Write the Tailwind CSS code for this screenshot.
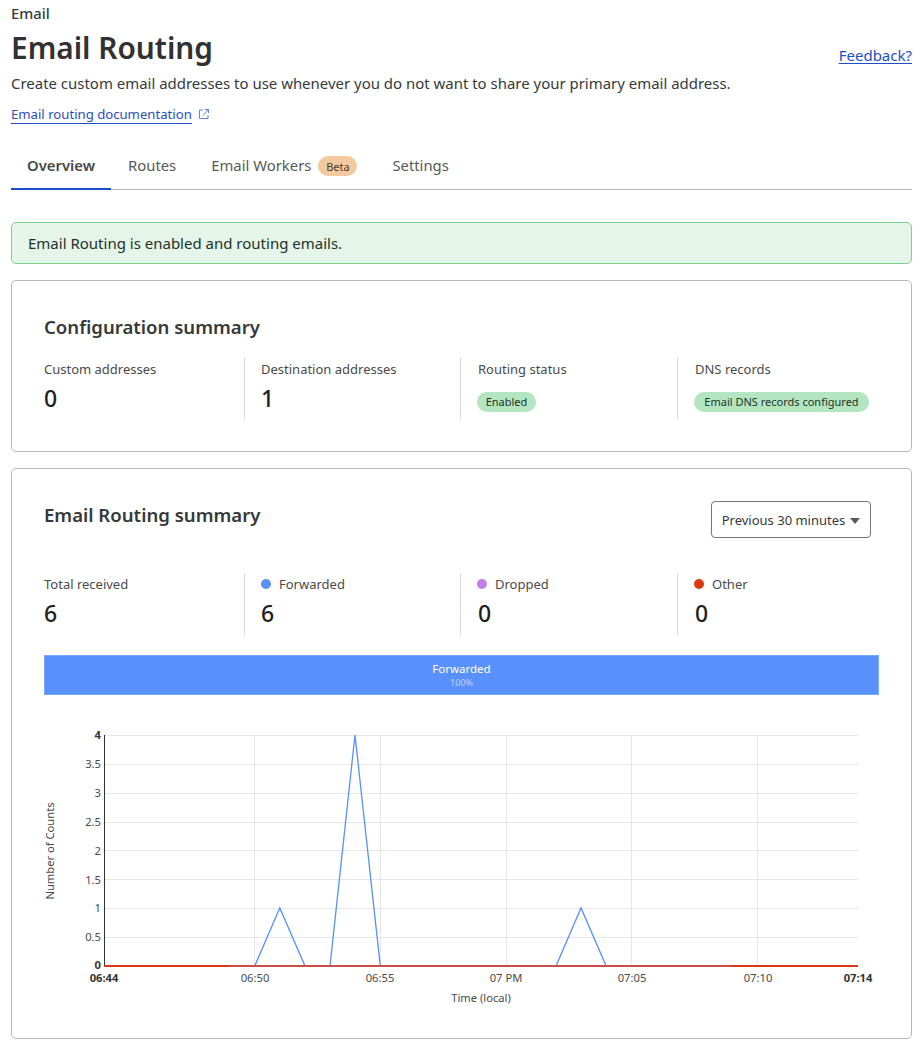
<!doctype html>
<html lang="en">
<head>
<meta charset="utf-8">
<title>Email Routing</title>
<script src="https://cdn.jsdelivr.net/npm/@tailwindcss/browser@4"></script>
</head>
<body class="bg-white font-['Noto_Sans',sans-serif] text-[#313131] overflow-hidden">
<div class="w-[923px] h-[1045px] overflow-hidden px-[11px]">
  <div class="w-[901px]">
    <div class="pt-[4px] h-[27px] text-[14.8px] leading-[18px] font-medium text-[#36393a]">Email</div>
    <div class="flex justify-between items-start h-[44px]">
      <h1 class="text-[29.8px] leading-[42px] font-semibold text-[#313131]">Email Routing</h1>
      <a class="mt-[18px] text-[15px] leading-[20px] text-[#1d4fc4] underline underline-offset-2">Feedback?</a>
    </div>
    <p class="mt-[1px] text-[14.96px] leading-[22px] text-[#36393a]">Create custom email addresses to use whenever you do not want to share your primary email address.</p>
    <div class="mt-[9px] flex items-center gap-[6px] h-[22px]">
      <a class="text-[13.15px] leading-[18px] text-[#2c4fbd] border-b border-[#1d4fc4]">Email routing documentation</a>
      <svg class="w-[12px] h-[12px] text-[#5f86d8]" viewBox="0 0 12 12" fill="none" stroke="currentColor" stroke-width="1"><path d="M5 2H1.5v8.5H10V7"/><path d="M5 7.5 10.5 1.5M7 1.5h3.5V5"/></svg>
    </div>
    <nav class="mt-[20px] h-[45px] flex items-stretch border-b border-[#b5b5b5] text-[14.85px] text-[#595959]">
      <a class="w-[100px] pl-[16px] pt-[9px] leading-[22px] font-semibold text-[#484848] border-b-2 border-[#1d4fc4] mb-[-1px]">Overview</a>
      <a class="ml-[17px] pt-[9px] leading-[22px]">Routes</a>
      <a class="ml-[35px] pt-[9px] leading-[22px]">Email Workers</a>
      <span class="ml-[7px] mt-[11px] h-[20px] w-[39px] rounded-full bg-[#f3ca9f] text-[11px] leading-[21px] text-center text-[#4a3a2a]">Beta</span>
      <a class="ml-[35px] pt-[9px] leading-[22px]">Settings</a>
    </nav>
    <div class="mt-[32px] h-[42px] rounded-[5px] border border-[#7fcf8f] bg-[#e5f5ea] pl-[16px] text-[15px] leading-[41px] text-[#1e3327]">Email Routing is enabled and routing emails.</div>
    <section class="mt-[16px] h-[172px] rounded-[5px] border border-[#b8b8b8] px-[32px] pt-[33px]">
      <h2 class="text-[18.57px] leading-[26px] font-semibold text-[#36393a]">Configuration summary</h2>
      <div class="mt-[18px] mx-[-16px] grid grid-cols-[217px_216px_217px_217px] text-[13px] leading-[20px] text-[#4a4a4a]">
        <div class="h-[61px] pt-[1px] px-[16px] border-r border-[#d9d9d9]"><div>Custom addresses</div><div class="mt-[4px] text-[23px] leading-[30px] font-medium text-[#1f1f1f]">0</div></div>
        <div class="h-[61px] pt-[1px] px-[16px] border-r border-[#d9d9d9]"><div>Destination addresses</div><div class="mt-[4px] text-[23px] leading-[30px] font-medium text-[#1f1f1f]">1</div></div>
        <div class="h-[61px] pt-[1px] pl-[17px] pr-[16px] border-r border-[#d9d9d9]"><div>Routing status</div><span class="inline-block mt-[13px] ml-[-1px] h-[20px] w-[59px] text-center rounded-full bg-[#b3e5c1] text-[11px] leading-[20px] text-[#1e3327]">Enabled</span></div>
        <div class="h-[61px] pt-[1px] pl-[17px] pr-[16px]"><div>DNS records</div><span class="inline-block mt-[13px] ml-[-1px] h-[20px] w-[175px] text-center rounded-full bg-[#b3e5c1] text-[11px] leading-[20px] whitespace-nowrap text-[#1e3327]">Email DNS records configured</span></div>
      </div>
    </section>
    <section class="mt-[16px] h-[571px] rounded-[5px] border border-[#b8b8b8] px-[32px] pt-[32px]">
      <div class="flex justify-between items-start h-[69px]">
        <h2 class="mt-[1px] text-[18.57px] leading-[26px] font-semibold text-[#36393a]">Email Routing summary</h2>
        <button class="mr-[8px] w-[160px] h-[37px] pt-[2px] rounded-[4px] border border-[#767676] flex items-center justify-center gap-[5px] text-[13px] text-[#36393a]">Previous 30 minutes<svg class="w-[10px] h-[6px]" viewBox="0 0 10 6"><path d="M0 0h10L5 6z" fill="#595959"/></svg></button>
      </div>
      <div class="mx-[-16px] mt-[4px] grid grid-cols-[217px_216px_217px_217px] text-[13px] leading-[20px] text-[#4a4a4a]">
        <div class="h-[61px] px-[16px] border-r border-[#d9d9d9]"><div>Total received</div><div class="mt-[4px] text-[23px] leading-[30px] font-medium text-[#1f1f1f]">6</div></div>
        <div class="h-[61px] px-[16px] border-r border-[#d9d9d9]"><div class="flex items-center gap-[8px]"><span class="w-[10px] h-[10px] rounded-full bg-[#5891f7]"></span>Forwarded</div><div class="mt-[4px] text-[23px] leading-[30px] font-medium text-[#1f1f1f]">6</div></div>
        <div class="h-[61px] pl-[17px] pr-[16px] border-r border-[#d9d9d9]"><div class="flex items-center gap-[8px] ml-[-1px]"><span class="w-[10px] h-[10px] rounded-full bg-[#c47fe3]"></span>Dropped</div><div class="mt-[4px] text-[23px] leading-[30px] font-medium text-[#1f1f1f]">0</div></div>
        <div class="h-[61px] pl-[17px] pr-[16px]"><div class="flex items-center gap-[8px] ml-[-1px]"><span class="w-[10px] h-[10px] rounded-full bg-[#d93a14]"></span>Other</div><div class="mt-[4px] text-[23px] leading-[30px] font-medium text-[#1f1f1f]">0</div></div>
      </div>
      <div class="mt-[20px] h-[40px] border border-[#7aa8fa] bg-[#5891fb] flex flex-col items-center text-white">
        <div class="mt-[5px] text-[11.5px] leading-[16px]">Forwarded</div>
        <div class="text-[9px] leading-[11px] text-white/60">100%</div>
      </div>
      <svg class="mt-[27px] block overflow-visible" width="835" height="300" viewBox="44 722 835 300" font-family="'Noto Sans',sans-serif" font-size="11.2" fill="#4a4a4a">
        <g stroke="#e6e6e6" stroke-width="1" shape-rendering="crispEdges">
          <path d="M104 735.5H858M104 764.5H858M104 793.5H858M104 822.5H858M104 850.5H858M104 879.5H858M104 908.5H858M104 937.5H858"/>
          <path d="M254.5 735V966M380.5 735V966M506.5 735V966M631.5 735V966M757.5 735V966"/>
        </g>
        <path d="M104.5 735V966" stroke="#333" stroke-width="1" shape-rendering="crispEdges"/>
        <polyline fill="none" stroke="#5891f7" stroke-width="1.3" points="104,966 254.7,966 279.8,908 305,966 330,966 355,735 380.3,966 556,966 581,908 606.2,966 858,966"/>
        <path d="M104 966H230M732 966H858" stroke="#d93a14" stroke-width="2"/>
        <path d="M230 966H732" stroke="#c9504a" stroke-width="2"/>
        <g text-anchor="end">
          <text x="101" y="739" font-weight="700" fill="#333">4</text>
          <text x="101" y="768">3.5</text>
          <text x="101" y="797">3</text>
          <text x="101" y="826">2.5</text>
          <text x="101" y="855">2</text>
          <text x="101" y="884">1.5</text>
          <text x="101" y="912">1</text>
          <text x="101" y="941">0.5</text>
          <text x="101" y="969" font-weight="700" fill="#333">0</text>
        </g>
        <g text-anchor="middle">
          <text x="104" y="982" font-weight="700" fill="#333">06:44</text>
          <text x="255" y="982">06:50</text>
          <text x="380" y="982">06:55</text>
          <text x="506" y="982">07 PM</text>
          <text x="632" y="982">07:05</text>
          <text x="758" y="982">07:10</text>
          <text x="858" y="982" font-weight="700" fill="#333">07:14</text>
          <text x="481" y="1002">Time (local)</text>
          <text transform="translate(54 851) rotate(-90)">Number of Counts</text>
        </g>
      </svg>
    </section>
  </div>
</div>
</body>
</html>
